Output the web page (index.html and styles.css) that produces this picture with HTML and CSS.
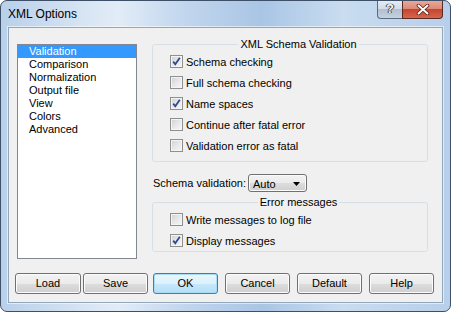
FILE: index.html
```html
<!DOCTYPE html>
<html>
<head>
<meta charset="utf-8">
<link rel="stylesheet" href="styles.css">
</head>
<body>
<div class="window">
  <div class="titlebar">
    <span class="title">XML Options</span>
    <div class="caption-btns">
      <div class="cap-help">?</div>
      <div class="cap-close">
        <svg width="14" height="11" viewBox="0 0 14 11"><path d="M2.5 1.5 L11.5 9.5 M11.5 1.5 L2.5 9.5" stroke="#5a1a10" stroke-width="3.6" stroke-linecap="round"/><path d="M2.5 1.5 L11.5 9.5 M11.5 1.5 L2.5 9.5" stroke="#ffffff" stroke-width="2" stroke-linecap="round"/></svg>
      </div>
    </div>
  </div>
  <div class="client">
    <div class="main">
      <ul class="list">
        <li class="item selected">Validation</li>
        <li class="item">Comparison</li>
        <li class="item">Normalization</li>
        <li class="item">Output file</li>
        <li class="item">View</li>
        <li class="item">Colors</li>
        <li class="item">Advanced</li>
      </ul>
      <div class="right">
        <fieldset class="group g1">
          <legend>XML Schema Validation</legend>
          <div class="row"><span class="cb checked"><svg width="11" height="11" viewBox="0 0 11 11"><path d="M2.2 5.6 L4.3 8.3 L8.8 1.8" fill="none" stroke="#344a8a" stroke-width="1.8"/></svg></span><span>Schema checking</span></div>
          <div class="row"><span class="cb"></span><span>Full schema checking</span></div>
          <div class="row"><span class="cb checked"><svg width="11" height="11" viewBox="0 0 11 11"><path d="M2.2 5.6 L4.3 8.3 L8.8 1.8" fill="none" stroke="#344a8a" stroke-width="1.8"/></svg></span><span>Name spaces</span></div>
          <div class="row"><span class="cb"></span><span>Continue after fatal error</span></div>
          <div class="row"><span class="cb"></span><span>Validation error as fatal</span></div>
        </fieldset>
        <div class="combo-row">
          <span class="combo-label">Schema validation:</span>
          <div class="combo"><span>Auto</span><svg width="7" height="4" viewBox="0 0 7 4"><path d="M0 0 H7 L3.5 4 Z" fill="#000"/></svg></div>
        </div>
        <fieldset class="group g2">
          <legend>Error messages</legend>
          <div class="row"><span class="cb"></span><span>Write messages to log file</span></div>
          <div class="row"><span class="cb checked"><svg width="11" height="11" viewBox="0 0 11 11"><path d="M2.2 5.6 L4.3 8.3 L8.8 1.8" fill="none" stroke="#344a8a" stroke-width="1.8"/></svg></span><span>Display messages</span></div>
        </fieldset>
      </div>
    </div>
    <div class="buttons">
      <div class="btn-group left">
        <div class="btn wide">Load</div>
        <div class="btn">Save</div>
      </div>
      <div class="btn-group rightg">
        <div class="btn default">OK</div>
        <div class="btn">Cancel</div>
        <div class="btn">Default</div>
        <div class="btn">Help</div>
      </div>
    </div>
  </div>
</div>
</body>
</html>
```
FILE: styles.css
```css
* { box-sizing: border-box; }
html, body { margin: 0; padding: 0; background: #ffffff; }
body { font-family: "Liberation Sans", Arial, sans-serif; font-size: 11px; color: #000; }

.window {
  width: 451px;
  height: 312px;
  border: 1px solid #3d5067;
  border-radius: 7px;
  background: linear-gradient(90deg, #b9d0ea 0%, #d6e4f3 18%, #e2ecf7 26%, #c3d7ee 40%, #a9c5e5 58%, #c9dcf0 76%, #b7cfea 100%);
  display: flex;
  flex-direction: column;
  overflow: hidden;
}

.titlebar {
  height: 26px;
  display: flex;
  align-items: flex-start;
  padding: 0 7px 0 7px;
}
.title {
  font-size: 12px;
  color: #000;
  margin-top: 6px;
}
.caption-btns {
  margin-left: auto;
  display: flex;
  height: 18px;
}
.cap-help {
  width: 25px;
  height: 18px;
  border: 1px solid #5b6b7e;
  border-top: none;
  border-right: none;
  border-radius: 0 0 0 4px;
  background: linear-gradient(#e4ebf3 0%, #d3dde8 45%, #b2c0cf 50%, #c5d3e0 100%);
  color: #f4f8fc;
  font-weight: bold;
  font-size: 13px;
  line-height: 16px;
  text-align: center;
  text-shadow: 0 0 1px #344354, 0 0 1px #344354, 1px 0 0 #344354, -1px 0 0 #344354;
}
.cap-close {
  width: 41px;
  height: 18px;
  border: 1px solid #5b2a24;
  border-top: none;
  border-radius: 0 0 4px 0;
  background: linear-gradient(#e8a898 0%, #dc8a77 45%, #c8452f 50%, #d5664c 100%);
  display: flex;
  align-items: center;
  justify-content: center;
}

.client {
  margin: 0 7px;
  height: 276px;
  background: #f0f0f0;
  border: 1px solid #93a7bc;
  box-shadow: 0 0 0 1px rgba(255,255,255,0.55);
  display: flex;
  flex-direction: column;
}

.main {
  display: flex;
  align-items: flex-start;
  padding: 10px 0 0 8px;
}

.list {
  list-style: none;
  margin: 6px 0 0 0;
  padding: 0;
  width: 120px;
  height: 215px;
  background: #ffffff;
  border: 1px solid #828790;
}
.item {
  height: 13px;
  line-height: 13px;
  padding-left: 11px;
  white-space: nowrap;
}
.item.selected {
  background: #3399ff;
  color: #ffffff;
}

.right {
  margin-left: 15px;
  width: 276px;
  display: flex;
  flex-direction: column;
}

.group {
  margin: 0;
  padding: 0 0 5px 17px;
  border: 1px solid #d5dfe5;
  border-radius: 3px;
  min-width: 0;
}
.group legend {
  margin: 0 auto;
  padding: 0 2px;
  line-height: 13px;
  font-size: 11px;
}
.g2 {
  margin-top: 4px;
  padding-bottom: 0;
}

.row {
  height: 21px;
  display: flex;
  align-items: center;
  white-space: nowrap;
}
.cb {
  width: 13px;
  height: 13px;
  border: 1px solid #8e8f8f;
  background: linear-gradient(135deg, #cdd0d4 0%, #e6e7e9 50%, #f7f7f7 100%);
  box-shadow: inset 0 0 0 1px #f4f4f4;
  margin-right: 3px;
  display: flex;
  align-items: center;
  justify-content: center;
}
.cb svg { display: block; }

.combo-row {
  margin-top: 12px;
  height: 18px;
  display: flex;
  align-items: center;
}
.combo-label {
  width: 96px;
  padding-left: 1px;
  white-space: nowrap;
}
.combo {
  width: 59px;
  height: 18px;
  border: 1px solid #707070;
  border-radius: 3px;
  background: linear-gradient(#f2f2f2 0%, #ebebeb 50%, #dddddd 50%, #cfcfcf 100%);
  box-shadow: inset 0 0 0 1px #fbfbfb;
  display: flex;
  align-items: center;
  justify-content: space-between;
  padding: 1px 6px 0 4px;
}

.buttons {
  margin-top: auto;
  padding: 0 0 8px 6px;
  display: flex;
  align-items: flex-end;
}
.btn-group { display: flex; }
.btn-group.left { gap: 2px; }
.btn-group.rightg { gap: 7px; margin-left: 5px; }
.btn {
  width: 65px;
  height: 21px;
  border: 1px solid #707070;
  border-radius: 3px;
  background: linear-gradient(#f2f2f2 0%, #ebebeb 50%, #dddddd 50%, #cfcfcf 100%);
  box-shadow: inset 0 0 0 1px #fcfcfc;
  text-align: center;
  line-height: 19px;
}
.btn.wide { width: 66px; }
.btn.default {
  border-color: #3c7fb1;
  background: linear-gradient(#eaf6fd 0%, #dcf1fc 50%, #c6e8fb 50%, #b4dff6 100%);
  box-shadow: inset 0 0 0 1px #a9dcf6;
}
```
